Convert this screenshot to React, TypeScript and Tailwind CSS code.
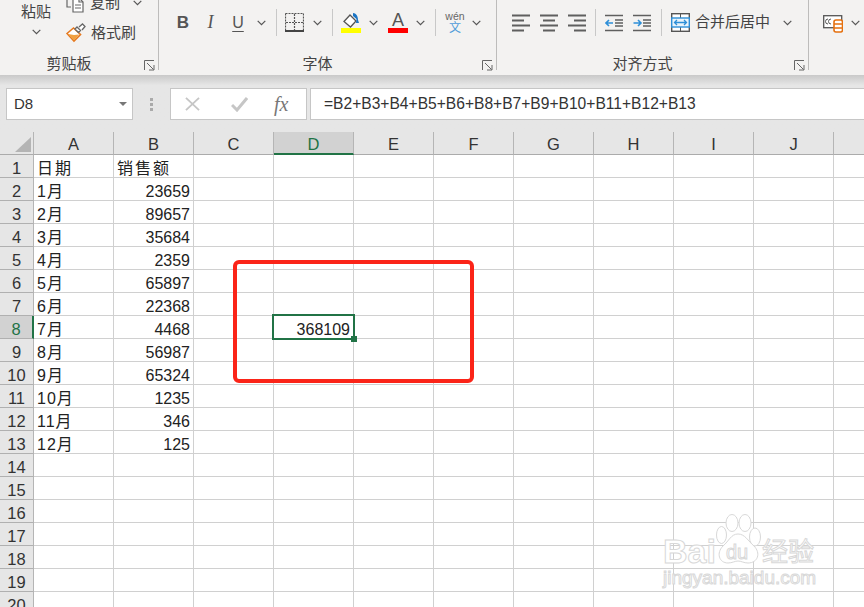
import React from "react";

const cols = ["A", "B", "C", "D", "E", "F", "G", "H", "I", "J"];
const rowData: [string, string][] = [
  ["日期", "销售额"],
  ["1月", "23659"],
  ["2月", "89657"],
  ["3月", "35684"],
  ["4月", "2359"],
  ["5月", "65897"],
  ["6月", "22368"],
  ["7月", "4468"],
  ["8月", "56987"],
  ["9月", "65324"],
  ["10月", "1235"],
  ["11月", "346"],
  ["12月", "125"],
];
const rows = Array.from({ length: 20 }, (_, i) => i + 1);

function Chevron({ className = "" }: { className?: string }) {
  return (
    <span className={`flex h-[18px] w-[18px] shrink-0 items-center justify-center ${className}`}>
      <svg width="9" height="6" viewBox="0 0 9 6" fill="none" stroke="#555" strokeWidth="1.2">
        <path d="M.7.8 4.5 4.6 8.3.8" />
      </svg>
    </span>
  );
}

function Sep({ className = "" }: { className?: string }) {
  return <div className={`h-[27px] w-px shrink-0 bg-[#c8c8c8] ${className}`} />;
}

function Launcher() {
  return (
    <svg className="-mr-[17px] mt-[3px] justify-self-end" width="11" height="11" viewBox="0 0 11 11" fill="none" stroke="#666">
      <path d="M.5 10V.5H10" />
      <path d="M3 3l6.5 6.5M10 5v5H5" />
    </svg>
  );
}

function GroupLabel({ label }: { label: string }) {
  return (
    <div className="mt-[8px] grid h-[20px] grid-cols-[1fr_auto_1fr] items-center pr-[20px] text-[15px] text-[#444]">
      <span />
      <span>{label}</span>
      <Launcher />
    </div>
  );
}

function AlignIcon({ kind }: { kind: "left" | "center" | "right" }) {
  const x = (w: number) => (kind === "left" ? 0 : kind === "center" ? (18 - w) / 2 : 18 - w);
  return (
    <svg className="block" width="18" height="18" viewBox="0 0 18 18" fill="#5f5f5f">
      <rect x={x(18)} y="0.500" width="18" height="2" />
      <rect x={x(12)} y="5.500" width="12" height="2" />
      <rect x={x(18)} y="10.500" width="18" height="2" />
      <rect x={x(12)} y="15.500" width="12" height="2" />
    </svg>
  );
}

function IndentIcon({ flip }: { flip?: boolean }) {
  return (
    <svg className="block" width="18" height="18" viewBox="0 0 18 18" fill="none">
      <g stroke="#5f5f5f" strokeWidth="1.6">
        <path d="M0 1.500h18M0 16.500h18" />
        <path d="M10 6h8M10 9h8M10 12h8" />
      </g>
      <path
        d={flip ? "M.5 9H8M5 6l3 3-3 3" : "M8 9H1M4 6 1 9l3 3"}
        stroke="#2e8fd8"
        strokeWidth="1.6"
      />
    </svg>
  );
}

function Ribbon() {
  return (
    <div className="flex h-[75px] shrink-0 overflow-hidden bg-[#f3f2f1]">
      {/* 剪贴板 */}
      <div className="h-[70px] w-[159px] shrink-0 border-r border-[#bdbcbb]">
        <div className="flex h-[45px]">
          <div className="ml-[21px] flex w-[30px] flex-col items-center pt-[1px]">
            <span className="text-[15px] leading-[22px] text-[#444]">粘贴</span>
            <Chevron />
          </div>
          <div className="ml-[15px] -mt-[12px] flex flex-col">
            <div className="flex h-[30px] shrink-0 items-center">
              <svg width="20" height="20" viewBox="0 0 20 20" fill="none" stroke="#666" strokeWidth="1.2">
                <path d="M1 2v12h4" />
                <path d="M7 5h6l4 4v10H7z" fill="#fff" />
                <path d="M13 5v4h4M9 12h6M9 15h6" />
              </svg>
              <span className="ml-[4px] text-[15px] text-[#444]">复制</span>
              <Chevron className="ml-[8px]" />
            </div>
            <div className="flex h-[30px] shrink-0 items-center">
              <svg width="20" height="20" viewBox="0 0 20 20" fill="none">
                <path d="M1 10.500 7.500 5l7 6.500L8 18z" fill="#fff" stroke="#e5781e" strokeWidth="1.6" />
                <path d="M2 11l6 1 5-.5-5 6z" fill="#f0a040" />
                <path d="m9 6 2-2 3.500 3.500-2 2zM13 4l3.500-3 2.500 2.500-3 3.500" stroke="#666" strokeWidth="1.3" fill="#fff" />
              </svg>
              <span className="ml-[5px] text-[15px] text-[#444]">格式刷</span>
            </div>
          </div>
        </div>
        <GroupLabel label="剪贴板" />
      </div>

      {/* 字体 */}
      <div className="h-[70px] w-[338px] shrink-0 border-r border-[#bdbcbb]">
        <div className="flex h-[45px] items-center pl-[10px] text-[#555]">
          <span className="w-[28px] text-center font-['Liberation_Sans'] text-[17px] font-bold">B</span>
          <span className="w-[27px] text-center font-['Liberation_Serif'] text-[18px] italic">I</span>
          <span className="w-[28px] text-center font-['Liberation_Sans'] text-[16px] underline underline-offset-[3px]">U</span>
          <Chevron />
          <Sep className="ml-[6px]" />
          <svg className="ml-[8px]" width="19" height="19" viewBox="0 0 19 19" fill="none">
            <path d="M.5.500h18v18M.5.500v17M9.500 1v17M1 9.500h17" stroke="#555" strokeWidth="1.2" strokeDasharray="2 1" />
            <path d="M0 18h19" stroke="#444" strokeWidth="2" />
          </svg>
          <Chevron className="ml-[4px]" />
          <Sep className="ml-[6px]" />
          <svg className="ml-[8px]" width="20" height="21" viewBox="0 0 20 21" fill="none">
            <path d="M3 9.500 9 3l6 6-5.500 6z" fill="#fff" stroke="#555" strokeWidth="1.3" />
            <path d="M12 1c3 0 5 3 5 7l1 3h-3l.5-4L12 4z" fill="#1b75c4" />
            <rect y="16" width="20" height="5" fill="#ffff00" />
          </svg>
          <Chevron className="ml-[3px]" />
          <div className="ml-[6px] flex h-[21px] w-[20px] flex-col items-center">
            <span className="h-[16px] font-['Liberation_Sans'] text-[18px] leading-[16px] text-[#555]">A</span>
            <span className="h-[5px] w-[20px] bg-[#ff0000]" />
          </div>
          <Chevron className="ml-[3px]" />
          <Sep className="ml-[6px]" />
          <div className="ml-[9px] flex w-[20px] flex-col items-center leading-none">
            <span className="font-['Liberation_Sans'] text-[10.500px] text-[#666]">wén</span>
            <span className="mt-[1px] text-[12px] text-[#4f9bd9]">文</span>
          </div>
          <Chevron className="ml-[2px]" />
        </div>
        <GroupLabel label="字体" />
      </div>

      {/* 对齐方式 */}
      <div className="h-[70px] w-[312px] shrink-0 border-r border-[#bdbcbb]">
        <div className="flex h-[45px] items-center pl-[15px]">
          <AlignIcon kind="left" />
          <span className="ml-[10px]"><AlignIcon kind="center" /></span>
          <span className="ml-[10px]"><AlignIcon kind="right" /></span>
          <Sep className="ml-[9px]" />
          <span className="ml-[9px]"><IndentIcon /></span>
          <span className="ml-[10px]"><IndentIcon flip /></span>
          <Sep className="ml-[10px]" />
          <svg className="ml-[9px]" width="19" height="19" viewBox="0 0 19 19" fill="none">
            <rect x=".7" y=".7" width="17.600" height="17.600" stroke="#555" strokeWidth="1.4" fill="#fff" />
            <path d="M9.500 1v4M9.500 14v4" stroke="#555" />
            <rect x=".7" y="5" width="17.600" height="9" fill="#eaf4fb" stroke="#2e8fd8" strokeWidth="1.4" />
            <path d="M3.500 9.500h12M6 7l-2.500 2.500L6 12M13 7l2.500 2.500L13 12" stroke="#2e8fd8" strokeWidth="1.3" />
          </svg>
          <span className="ml-[5px] text-[15px] text-[#444]">合并后居中</span>
          <Chevron className="ml-[8px]" />
        </div>
        <GroupLabel label="对齐方式" />
      </div>

      {/* 样式 */}
      <div className="flex h-[45px] items-center pl-[14px]">
        <svg width="20" height="20" viewBox="0 0 20 20" fill="none">
          <rect x=".7" y="2.700" width="18" height="12" stroke="#555" strokeWidth="1.3" fill="#fff" />
          <path d="M5 6a2 2 0 0 0 0 5M8 6a2 2 0 0 0 0 5" stroke="#555" />
          <rect x="11" y="7" width="8.500" height="12" rx="2" fill="#fff" stroke="#e5700f" strokeWidth="1.6" />
          <path d="M11 11h8.500M11 15h8.500" stroke="#e5700f" strokeWidth="1.4" />
        </svg>
        <Chevron className="ml-[3px]" />
      </div>
    </div>
  );
}

function FormulaBar() {
  return (
    <div className="h-[57px] shrink-0 bg-gradient-to-b from-[#c9c9c9] from-0% to-[#e6e6e6] to-[18%]">
      <div className="flex items-stretch pt-[13px]">
        <div className="ml-[6px] flex h-[32px] w-[127px] items-center justify-between border border-[#c6c6c6] bg-white pl-[7px] pr-[5px]">
          <span className="text-[15px] text-[#333]">D8</span>
          <span className="h-0 w-0 border-x-[4px] border-t-[4px] border-x-transparent border-t-[#777]" />
        </div>
        <div className="ml-[15px] flex w-[7px] flex-col items-center justify-center gap-[2px]">
          <span className="h-[3px] w-[3px] bg-[#aaa]" />
          <span className="h-[3px] w-[3px] bg-[#aaa]" />
          <span className="h-[3px] w-[3px] bg-[#aaa]" />
        </div>
        <div className="ml-[15px] flex h-[32px] w-[137px] items-center border border-[#c6c6c6] bg-white">
          <svg className="ml-[14px]" width="15" height="14" viewBox="0 0 16 15" stroke="#c6c6c6" strokeWidth="2" fill="none">
            <path d="M1 1l14 13M15 1 1 14" />
          </svg>
          <svg className="ml-[31px]" width="17" height="15" viewBox="0 0 17 15" stroke="#c6c6c6" strokeWidth="3" fill="none">
            <path d="M1 8l5 5L16 1" />
          </svg>
          <span className="ml-[26px] font-['Liberation_Serif'] text-[20px] italic leading-none text-[#777]">fx</span>
        </div>
        <div className="ml-[3px] flex h-[32px] flex-1 items-center border border-[#c6c6c6] border-r-0 bg-white pl-[13px] text-[15.600px] text-[#333]">
          =B2+B3+B4+B5+B6+B8+B7+B9+B10+B11+B12+B13
        </div>
      </div>
    </div>
  );
}

function ColumnHeader() {
  return (
    <div className="grid h-[23px] shrink-0 grid-cols-[34px_repeat(10,80px)_31px] grid-rows-[23px] bg-[#e6e6e6] font-['Liberation_Sans'] text-[16.500px] leading-none text-[#333]">
      <div className="flex items-end justify-end border-b border-r border-b-[#ababab] border-r-[#b5b5b5] pb-[2px] pr-[2px]">
        <svg className="block" width="16" height="15" viewBox="0 0 16 15" fill="#b4b4b4">
          <path d="M16 0v15H0z" />
        </svg>
      </div>
      {cols.map((c) =>
        c === "D" ? (
          <div key={c} className="flex items-center justify-center border-b-2 border-r border-b-[#217346] border-r-[#b5b5b5] bg-[#d2d2d2] pt-[3px] text-[#217346]">
            {c}
          </div>
        ) : (
          <div key={c} className="flex items-center justify-center border-b border-r border-b-[#ababab] border-r-[#b5b5b5] pt-[3px]">
            {c}
          </div>
        )
      )}
      <div className="border-b border-b-[#ababab]" />
    </div>
  );
}

function Sheet() {
  return (
    <div className="flex-1 overflow-hidden bg-white font-['Liberation_Sans','Noto_Sans_CJK_SC',sans-serif] text-[16px] leading-none text-[#222]">
      {rows.map((r) => {
        const row = rowData[r - 1];
        return (
          <div key={r} className="grid h-[23px] grid-cols-[34px_repeat(10,80px)_31px] grid-rows-[23px]">
            <div
              className={`flex items-center justify-center border-b border-r border-b-[#b0b0b0] pt-[5px] text-[16.500px] ${
                r === 8
                  ? "border-r-2 border-r-[#217346] bg-[#d2d2d2] text-[#217346]"
                  : "border-r-[#b5b5b5] bg-[#e6e6e6] text-[#333]"
              }`}
            >
              {r}
            </div>
            {cols.map((c, i) => {
              let text = "";
              if (row && i === 0) text = row[0];
              if (row && i === 1) text = row[1];
              const isNum = /^\d+$/.test(text);
              const active = c === "D" && r === 8;
              return (
                <div
                  key={c}
                  className={`relative flex items-center border-b border-r border-[#d0d0d0] px-[3px] pt-[5px] ${
                    isNum ? "justify-end" : r === 1 ? "justify-start pt-[3px] tracking-[2px]" : "justify-start tracking-[1px]"
                  }`}
                >
                  {text}
                  {active && (
                    <div className="absolute -left-[2px] -top-[2px] z-10 flex h-[26px] w-[83px] items-center justify-end border-2 border-[#217346] pr-[3px] pt-[5px] tracking-normal">
                      368109
                      <span className="absolute -bottom-[4px] -right-[4px] h-[6px] w-[6px] bg-[#217346]" />
                    </div>
                  )}
                </div>
              );
            })}
            <div className="border-b border-[#d0d0d0]" />
          </div>
        );
      })}
    </div>
  );
}

function Watermark() {
  return (
    <div className="absolute left-[663px] top-[514px] h-[74px] w-[155px] font-['Liberation_Sans'] text-white [-webkit-text-stroke:1px_#d8d8d8]">
      <svg className="absolute left-[53px] top-0" width="46" height="52" viewBox="0 0 46 52" fill="#fff" stroke="#d8d8d8">
        <ellipse cx="16" cy="9" rx="6" ry="8.500" />
        <ellipse cx="29" cy="9" rx="6" ry="8.500" />
        <ellipse cx="5.500" cy="21" rx="5" ry="8.500" />
        <ellipse cx="39" cy="23" rx="5.500" ry="9" />
        <path d="M22 20c7 0 10 7 16 12 7 7 4 17-6 17-4 0-7-2-10-2s-6 2-10 2C3 49 0 39 7 32c6-5 8-12 15-12z" />
      </svg>
      <span className="absolute left-0 top-[19px] text-[34px] font-bold leading-[36px]">Bai</span>
      <span className="absolute left-[63px] top-[27px] text-[20px] leading-[22px]">du</span>
      <span className="absolute left-[99px] top-[21px] font-['Noto_Sans_CJK_SC'] text-[26px] leading-[30px]">经验</span>
      <span className="absolute left-0 top-[55px] text-[19px] leading-[18px]">jingyan.baidu.com</span>
    </div>
  );
}

export default function App() {
  return (
    <div className="relative flex h-[607px] w-[864px] flex-col overflow-hidden bg-white font-['Liberation_Sans','Noto_Sans_CJK_SC',sans-serif]">
      <Ribbon />
      <FormulaBar />
      <ColumnHeader />
      <Sheet />
      <div className="absolute left-[233px] top-[260px] z-20 h-[123px] w-[241px] rounded-[6px] border-[4px] border-[#fb2418]" />
      <Watermark />
    </div>
  );
}
